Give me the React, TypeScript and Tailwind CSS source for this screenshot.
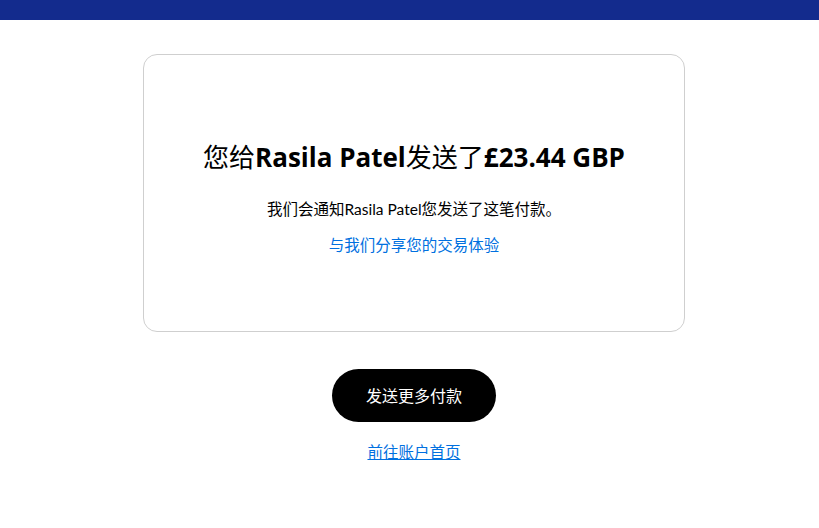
export default function App() {
  const font = { fontFamily: 'Lato, "Noto Sans CJK SC", sans-serif' };
  const bold = { fontFamily: '"Open Sans", "Noto Sans CJK SC", sans-serif' };
  return (
    <div className="min-h-[528px] bg-white text-black" style={font}>
      <div className="h-5 bg-[#132b8d]" />
      <div className="flex flex-col items-center pl-[9px] pt-[34px]">
        <div className="flex h-[278px] w-[542px] flex-col items-center rounded-[14px] border border-[#cfcfcf] pt-[83px]">
          <h1 className="text-[26px] leading-[38px]">
            您给<span className="font-bold" style={bold}>Rasila Patel</span>发送了
            <span className="font-bold" style={bold}>£23.44 GBP</span>
          </h1>
          <p className="mt-[22px] text-[15.5px] leading-[22px]">
            我们会通知Rasila Patel您发送了这笔付款。
          </p>
          <a href="#" className="mt-[14px] text-[15.5px] leading-[22px] text-[#0070e0]">
            与我们分享您的交易体验
          </a>
        </div>
        <button className="mt-[37px] h-[53px] w-[164px] rounded-full bg-black text-[16px] text-white">
          发送更多付款
        </button>
        <a href="#" className="mt-[19px] text-[15.5px] leading-[22px] text-[#0070e0] underline">
          前往账户首页
        </a>
      </div>
    </div>
  );
}
